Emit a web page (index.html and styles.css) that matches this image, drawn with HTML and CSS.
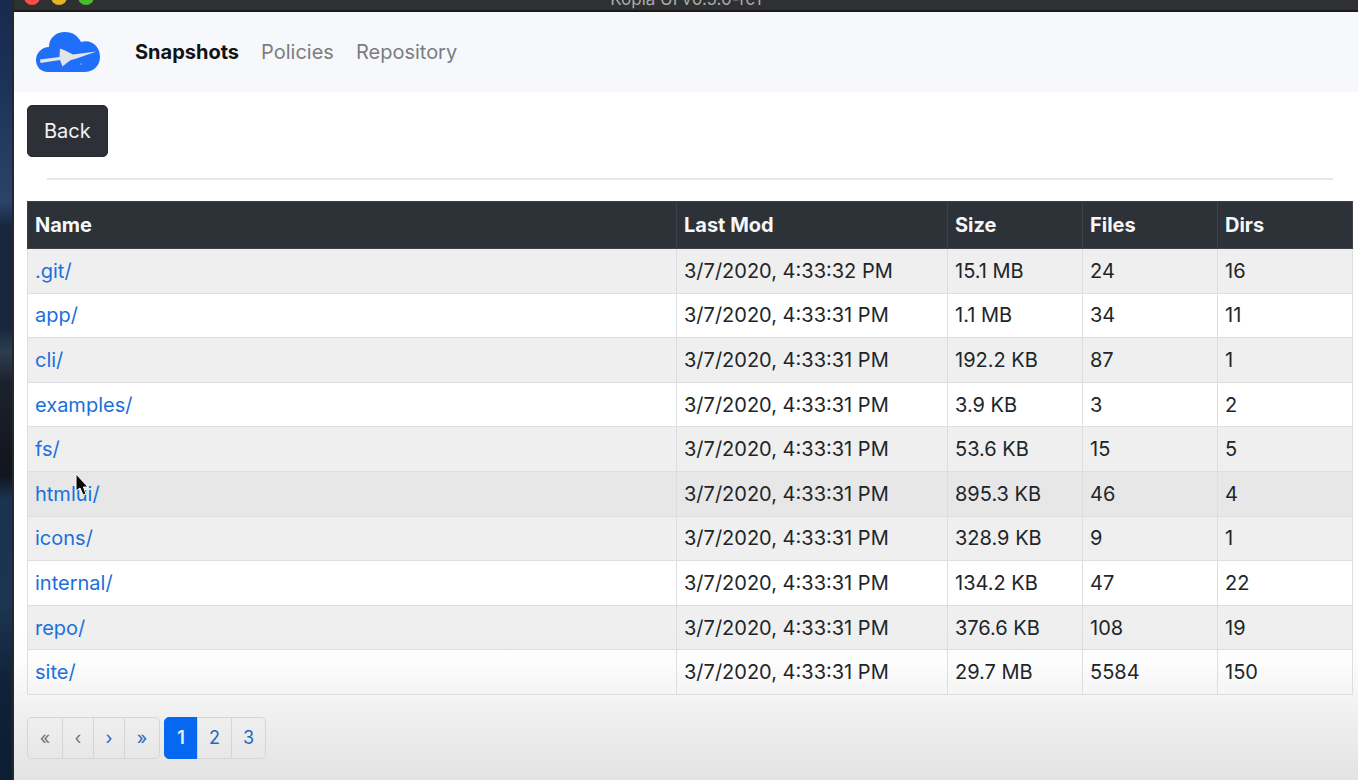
FILE: index.html
```html
<!DOCTYPE html>
<html lang="en">
<head>
<meta charset="utf-8">
<title>Kopia UI v0.5.0-rc1</title>
<link rel="stylesheet" href="styles.css">
</head>
<body>
<div class="desktop">
  <div class="window">
    <header class="titlebar">
      <div class="lights"><span class="light close"></span><span class="light minimise"></span><span class="light maximise"></span></div>
      <span class="title">Kopia UI v0.5.0-rc1</span>
    </header>
    <nav class="navbar">
      <a class="brand" href="#" aria-label="Kopia">
        <svg class="logo" viewBox="0 0 66 42" aria-hidden="true">
          <path fill="#1f6ffb" d="M13 41C6 41 1 36 1 29C1 22 7 16 14 16C14 7 21 1 30 1C38 1 43 5 46 11C57 8 65 16 65 26C65 35 58 41 49 41Z"/>
          <path fill="#e2e4e6" d="M5 28.500 24.500 26 25 17.500 29 19 38 23.500 61.500 20.500 40 28 36 29 33 31 27.500 35.500 25 29 5.500 32Z"/>
          <circle cx="46" cy="33" r="1" fill="#6a98ee"/>
        </svg>
      </a>
      <a class="nav-link active" href="#">Snapshots</a>
      <a class="nav-link" href="#">Policies</a>
      <a class="nav-link" href="#">Repository</a>
    </nav>
    <main class="content">
      <button class="back" type="button">Back</button>
      <hr class="rule">
      <table class="files">
        <colgroup><col class="col-name"><col class="col-date"><col class="col-num"><col class="col-num"><col class="col-num"></colgroup>
        <thead>
          <tr><th scope="col">Name</th><th scope="col">Last Mod</th><th scope="col">Size</th><th scope="col">Files</th><th scope="col">Dirs</th></tr>
        </thead>
        <tbody>
          <tr><td><a href="#">.git/</a></td><td>3/7/2020, 4:33:32 PM</td><td>15.1 MB</td><td>24</td><td>16</td></tr>
          <tr><td><a href="#">app/</a></td><td>3/7/2020, 4:33:31 PM</td><td>1.1 MB</td><td>34</td><td>11</td></tr>
          <tr><td><a href="#">cli/</a></td><td>3/7/2020, 4:33:31 PM</td><td>192.2 KB</td><td>87</td><td>1</td></tr>
          <tr><td><a href="#">examples/</a></td><td>3/7/2020, 4:33:31 PM</td><td>3.9 KB</td><td>3</td><td>2</td></tr>
          <tr><td><a href="#">fs/</a></td><td>3/7/2020, 4:33:31 PM</td><td>53.6 KB</td><td>15</td><td>5</td></tr>
          <tr class="hovered"><td><a href="#">htmlui/</a></td><td>3/7/2020, 4:33:31 PM</td><td>895.3 KB</td><td>46</td><td>4</td></tr>
          <tr><td><a href="#">icons/</a></td><td>3/7/2020, 4:33:31 PM</td><td>328.9 KB</td><td>9</td><td>1</td></tr>
          <tr><td><a href="#">internal/</a></td><td>3/7/2020, 4:33:31 PM</td><td>134.2 KB</td><td>47</td><td>22</td></tr>
          <tr><td><a href="#">repo/</a></td><td>3/7/2020, 4:33:31 PM</td><td>376.6 KB</td><td>108</td><td>19</td></tr>
          <tr><td><a href="#">site/</a></td><td>3/7/2020, 4:33:31 PM</td><td>29.7 MB</td><td>5584</td><td>150</td></tr>
        </tbody>
      </table>
      <div class="pagination">
        <div class="group steps">
          <button type="button" aria-label="First page" disabled>«</button>
          <button type="button" aria-label="Previous page" disabled>‹</button>
          <button type="button" aria-label="Next page">›</button>
          <button type="button" aria-label="Last page">»</button>
        </div>
        <div class="group pages">
          <button type="button" class="current" aria-current="page">1</button>
          <button type="button">2</button>
          <button type="button">3</button>
        </div>
      </div>
    </main>
  </div>
  <svg class="pointer" viewBox="0 0 14 24" aria-hidden="true">
    <path fill="#0b0b0b" stroke="#fff" stroke-width="1" d="M1 1V18L5 15L8 22L11 21L8.500 14H13Z"/>
  </svg>
</div>
</body>
</html>
```
FILE: styles.css
```css
* { box-sizing: border-box; }

body {
  margin: 0;
  font-family: Inter, "Liberation Sans", sans-serif;
  font-size: 20px;
  line-height: 28px;
  color: #212529;
}

a { color: #1b70dc; text-decoration: none; }
button { font: inherit; cursor: pointer; }

.desktop {
  position: relative;
  min-height: 100vh;
  padding-left: 12px;
  display: flex;
  overflow: hidden;
  background: linear-gradient(#172a4c 0%, #1b3158 10%, #2b426b 26%, #17263d 29%, #17263c 42%, #2d3d50 45%, #1c222d 49%, #14171e 58%, #11151e 61%, #1a3350 64%, #1c3450 78%, #0f2138 88%, #0d1d33 100%);
}

.window {
  flex: 1;
  min-width: 0;
  display: flex;
  flex-direction: column;
  border-left: 2px solid #24272d;
  background: linear-gradient(to top, #e3e3e3 0, #f2f2f2 76px, #fdfdfd 120px, #fff 150px);
}

.titlebar {
  height: 12px;
  display: grid;
  grid-template-columns: 1fr auto 1fr;
  grid-template-rows: 100%;
  align-items: end;
  overflow: hidden;
  background: #2f3032;
  border-bottom: 2px solid #1b1b1c;
}
.lights { display: flex; gap: 11px; padding: 0 0 5px 10px; }
.light { width: 16px; height: 16px; border-radius: 50%; }
.close { background: #fc4c48; }
.minimise { background: #e6b426; }
.maximise { background: #46bd2c; }
.title { font-size: 17px; line-height: 22px; color: #a9aaab; }

.navbar {
  display: flex;
  align-items: center;
  gap: 22px;
  padding: 19px 21px;
  background: #f6f8fb;
}
.brand { margin-right: 12px; }
.logo { display: block; width: 66px; height: 42px; }
.nav-link { color: #7b7d80; }
.nav-link.active { color: #121314; font-weight: 700; }

.content { padding: 13px 5px 21px 13px; }

.back {
  display: block;
  padding: 11px 16px;
  border: 1px solid #25292d;
  border-radius: 5px;
  background: #2d3137;
  color: #f1f3f6;
}

.rule {
  margin: 21px 20px;
  border: 0;
  border-top: 2px solid #e6e7e8;
}

.files {
  width: 100%;
  height: 494px;
  table-layout: fixed;
  border-collapse: collapse;
}
.col-date { width: 271px; }
.col-num { width: 135px; }
.files th, .files td {
  padding: 7px;
  border: 1px solid #dcdee1;
  text-align: left;
  white-space: nowrap;
}
.files th {
  height: 47px;
  background: #2d3138;
  border-color: #3d4248;
  color: #f6f7f9;
  font-weight: 700;
}
.files tbody tr:nth-child(odd) { background: rgba(0, 0, 0, 0.063); }
.files tbody tr.hovered { background: rgba(0, 0, 0, 0.094); }

.pagination { display: flex; gap: 4px; margin-top: 22px; }
.group { display: flex; }
.group button {
  height: 42px;
  padding: 0 11px;
  border: 1px solid #d3d5d8;
  background: transparent;
  color: #1f68c2;
  font-size: 18px;
}
.steps button { min-width: 32px; }
.steps button:first-child, .steps button:last-child { min-width: 36px; }
.pages button { min-width: 34px; }
.group button + button { margin-left: -1px; }
.group button:first-child { border-radius: 5px 0 0 5px; }
.group button:last-child { border-radius: 0 5px 5px 0; }
.group button:disabled { color: #737577; }
.group .current {
  background: #0668f0;
  border-color: #0668f0;
  color: #eaf3ff;
  font-weight: 600;
}

.pointer {
  position: absolute;
  left: 75px;
  top: 473px;
  width: 14px;
  height: 24px;
}
```
